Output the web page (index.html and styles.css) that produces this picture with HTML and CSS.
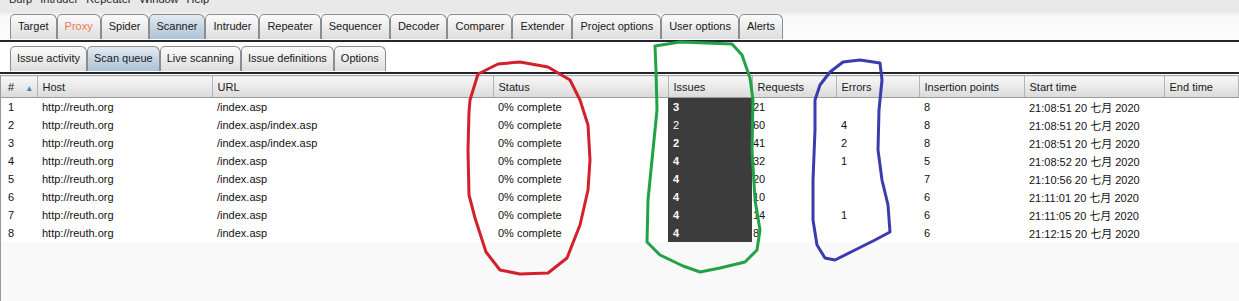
FILE: index.html
```html
<!DOCTYPE html>
<html lang="en">
    <head>
        <meta charset="utf-8">
        <title>Burp Suite | Scan queue</title>
        <meta name="viewport" content="width=device-width, initial-scale=1">
        <link rel="stylesheet" href="styles.css">
    </head>
    <body>
		<!-- Menu bar (cut off at the top) -->
		<header class="menubar">
			<div class="menu-items">
				<span>Burp</span>
				<span>Intruder</span>
				<span>Repeater</span>
				<span>Window</span>
				<span>Help</span>
			</div>
		</header>

		<!-- Main tool tabs -->
		<nav class="tabs main-tabs">
			<div class="tab">Target</div>
			<div class="tab tab-proxy">Proxy</div>
			<div class="tab">Spider</div>
			<div class="tab active">Scanner</div>
			<div class="tab">Intruder</div>
			<div class="tab">Repeater</div>
			<div class="tab">Sequencer</div>
			<div class="tab">Decoder</div>
			<div class="tab">Comparer</div>
			<div class="tab">Extender</div>
			<div class="tab">Project options</div>
			<div class="tab">User options</div>
			<div class="tab">Alerts</div>
		</nav>

		<!-- Scanner sub tabs -->
		<nav class="tabs sub-tabs">
			<div class="tab">Issue activity</div>
			<div class="tab active">Scan queue</div>
			<div class="tab">Live scanning</div>
			<div class="tab">Issue definitions</div>
			<div class="tab">Options</div>
		</nav>

		<main class="queue">
			<table class="queue-table">
				<colgroup>
					<col style="width: 36px">
					<col style="width: 175px">
					<col style="width: 281px">
					<col style="width: 175px">
					<col style="width: 84px">
					<col style="width: 84px">
					<col style="width: 83px">
					<col style="width: 105px">
					<col style="width: 140px">
					<col>
				</colgroup>
				<thead>
					<tr>
						<th class="col-num"># <span class="sort">&#9650;</span></th>
						<th>Host</th>
						<th>URL</th>
						<th>Status</th>
						<th>Issues</th>
						<th>Requests</th>
						<th>Errors</th>
						<th>Insertion points</th>
						<th>Start time</th>
						<th>End time</th>
					</tr>
				</thead>
				<tbody>
					<tr><td class="num">1</td><td>http://reuth.org</td><td>/index.asp</td><td>0% complete</td><td class="issues">3</td><td class="req">21</td><td></td><td>8</td><td class="date">21:08:51 20 七月 2020</td><td></td></tr>
					<tr><td class="num">2</td><td>http://reuth.org</td><td>/index.asp/index.asp</td><td>0% complete</td><td class="issues light">2</td><td class="req">60</td><td>4</td><td>8</td><td class="date">21:08:51 20 七月 2020</td><td></td></tr>
					<tr><td class="num">3</td><td>http://reuth.org</td><td>/index.asp/index.asp</td><td>0% complete</td><td class="issues">2</td><td class="req">41</td><td>2</td><td>8</td><td class="date">21:08:51 20 七月 2020</td><td></td></tr>
					<tr><td class="num">4</td><td>http://reuth.org</td><td>/index.asp</td><td>0% complete</td><td class="issues">4</td><td class="req">32</td><td>1</td><td>5</td><td class="date">21:08:52 20 七月 2020</td><td></td></tr>
					<tr><td class="num">5</td><td>http://reuth.org</td><td>/index.asp</td><td>0% complete</td><td class="issues">4</td><td class="req">20</td><td></td><td>7</td><td class="date">21:10:56 20 七月 2020</td><td></td></tr>
					<tr><td class="num">6</td><td>http://reuth.org</td><td>/index.asp</td><td>0% complete</td><td class="issues">4</td><td class="req">10</td><td></td><td>6</td><td class="date">21:11:01 20 七月 2020</td><td></td></tr>
					<tr><td class="num">7</td><td>http://reuth.org</td><td>/index.asp</td><td>0% complete</td><td class="issues">4</td><td class="req">14</td><td>1</td><td>6</td><td class="date">21:11:05 20 七月 2020</td><td></td></tr>
					<tr><td class="num">8</td><td>http://reuth.org</td><td>/index.asp</td><td>0% complete</td><td class="issues">4</td><td class="req">8</td><td></td><td>6</td><td class="date">21:12:15 20 七月 2020</td><td></td></tr>
				</tbody>
			</table>
		</main>

		<!-- Hand drawn marks over the screenshot -->
		<svg class="marks" width="1239" height="301" viewBox="0 0 1239 301">
			<polyline class="mark-red" points="470,100 478,74 498,64 520,62 548,67 570,80 580,100 588,125 590,160 588,190 580,225 567,258 548,273 520,274 500,270 486,252 475,218 469,195 468,150 469,112 470,100"/>
			<polyline class="mark-green" points="655,46 680,42 732,44 742,55 750,78 753,100 752,150 755,200 760,230 757,250 745,262 720,268 700,272 683,266 660,255 647,242 648,200 652,160 657,110 656,70 655,46"/>
			<polyline class="mark-blue" points="843,62 860,60 880,63 882,80 879,110 878,150 882,180 888,205 890,232 875,240 855,250 835,260 825,258 817,245 813,220 813,180 815,130 815,100 820,85 830,72 843,62"/>
		</svg>
    </body>
</html>
```

FILE: styles.css
```css
/* Reset */
*,
*::after,
*::before {
	margin: 0;
	padding: 0;
	box-sizing: border-box;
}

/* Base */
html,
body {
	width: 1239px;
	height: 301px;
	overflow: hidden;
}
body {
	position: relative;
	font-family: "Liberation Sans", "Noto Sans CJK SC", sans-serif;
	font-size: 11px;
	color: #111;
	background: #fff;
}

/* MENU */
.menubar {
	height: 12px;
	overflow: hidden;
	background: #e9e9e9;
}
.menu-items {
	display: flex;
	gap: 8px;
	margin-top: -7px;
	padding-left: 9px;
	line-height: 13px;
	color: #222;
}

/* TABS */
.tabs {
	display: flex;
	align-items: flex-end;
	padding-left: 10px;
	border-bottom: 2px solid #23262f;
}
.main-tabs {
	height: 30px;
	background: linear-gradient(#e9e9e9, #f8f8f8 4px, #fcfcfc);
}
.sub-tabs {
	height: 31px;
	margin-top: 1px;
	background: #fff;
}
.tab {
	height: 25px;
	line-height: 23px;
	padding: 0 7px;
	margin-bottom: 1px;
	border: 1px solid #8c8c8c;
	border-bottom: none;
	border-radius: 5px 6px 0 0;
	background: linear-gradient(#fbfbfb, #ececec 50%, #dedede);
	color: #1a1a1a;
	white-space: nowrap;
}
.sub-tabs .tab {
	padding: 0 6px;
}
.tab.active {
	background: linear-gradient(#e3ebf2, #c6d5e3 50%, #adc3d8);
}
.tab-proxy {
	color: #ec7a52;
}

/* TABLE */
.queue {
	margin-top: 1px;
	height: 240px;
	border-left: 1px solid #9a9a9a;
	background: #f9f9f9;
}
.queue-table {
	width: 1238px;
	table-layout: fixed;
	border-collapse: collapse;
}
.queue-table th {
	height: 22px;
	padding: 0 5px;
	text-align: left;
	font-weight: normal;
	color: #1a1a1a;
	background: linear-gradient(#f7f7f7, #e9e9e9 50%, #dadada);
	border-top: 1px solid #a9a9a9;
	border-bottom: 1px solid #9c9c9c;
	border-right: 1px solid #b4b4b4;
	white-space: nowrap;
}
.queue-table th.col-num {
	padding-left: 7px;
}
.sort {
	font-size: 8px;
	color: #4d7fb8;
	margin-left: 8px;
}
.queue-table td {
	height: 18px;
	padding: 0 5px;
	background: #fff;
	white-space: nowrap;
	overflow: hidden;
}
.queue-table td.num {
	padding-left: 7px;
}
.queue-table td.issues {
	background: #3c3c3c;
	color: #fff;
	font-weight: bold;
}
.queue-table td.issues.light {
	font-weight: normal;
}
.queue-table td.req {
	padding-left: 1px;
}
.queue-table td.date {
	padding-left: 5px;
}

/* MARKS */
.marks {
	position: absolute;
	top: 0;
	left: 0;
	pointer-events: none;
}
.marks polyline {
	fill: none;
	stroke-width: 3;
	stroke-linejoin: round;
	stroke-linecap: round;
}
.mark-red {
	stroke: #d3202c;
}
.mark-green {
	stroke: #21a245;
}
.mark-blue {
	stroke: #3a3cad;
}
```
